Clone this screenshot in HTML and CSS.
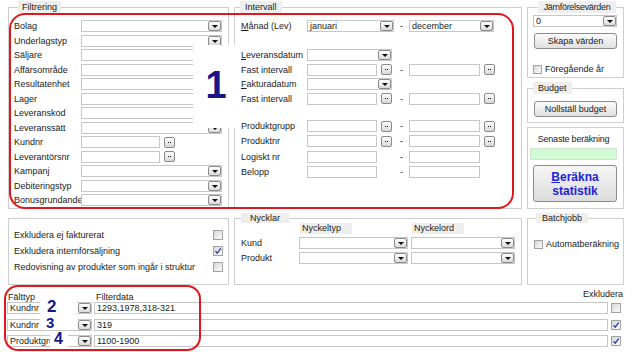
FILE: index.html
```html
<!DOCTYPE html>
<html lang="sv">
<head>
<meta charset="utf-8">
<title>Statistik</title>
<link rel="stylesheet" href="styles.css">
</head>
<body>
<div class="top">
  <fieldset class="grp filt">
    <legend>Filtrering</legend>
    <div class="frows">
      <span class="lbl">Bolag</span><div class="combo"><span></span><i class="arr"></i></div>
      <span class="lbl">Underlagstyp</span><div class="combo"><span></span><i class="arr"></i></div>
      <span class="lbl">Säljare</span><div class="inp"></div>
      <span class="lbl">Affärsområde</span><div class="inp"></div>
      <span class="lbl">Resultatenhet</span><div class="inp"></div>
      <span class="lbl">Lager</span><div class="inp"></div>
      <span class="lbl">Leveranskod</span><div class="inp"></div>
      <span class="lbl">Leveranssätt</span><div class="combo"><span></span><i class="arr"></i></div>
      <span class="lbl">Kundnr</span><div class="pair"><div class="inp w79"></div><i class="dots"></i></div>
      <span class="lbl">Leverantörsnr</span><div class="pair"><div class="inp w79"></div><i class="dots"></i></div>
      <span class="lbl">Kampanj</span><div class="combo"><span></span><i class="arr"></i></div>
      <span class="lbl">Debiteringstyp</span><div class="combo"><span></span><i class="arr"></i></div>
      <span class="lbl">Bonusgrundande</span><div class="combo"><span></span><i class="arr"></i></div>
    </div>
  </fieldset>

  <fieldset class="grp intv">
    <legend>Intervall</legend>
    <div class="igrid">
      <span class="lbl"><u>M</u>ånad (Lev)</span><div class="combo w87"><span>januari</span><i class="arr"></i></div><span class="dash">-</span><div class="combo w85"><span>december</span><i class="arr"></i></div>
    </div>
    <div class="igrid b2">
      <span class="lbl"><u>L</u>everansdatum</span><div class="combo w85"><span></span><i class="arr"></i></div><span></span><span></span>
      <span class="lbl">Fast intervall</span><div class="pair"><div class="inp w70"></div><i class="dots"></i></div><span class="dash">-</span><div class="pair"><div class="inp w71"></div><i class="dots"></i></div>
      <span class="lbl"><u>F</u>akturadatum</span><div class="combo w85"><span></span><i class="arr"></i></div><span></span><span></span>
      <span class="lbl">Fast intervall</span><div class="pair"><div class="inp w70"></div><i class="dots"></i></div><span class="dash">-</span><div class="pair"><div class="inp w71"></div><i class="dots"></i></div>
    </div>
    <div class="igrid b3">
      <span class="lbl">Produktgrupp</span><div class="pair"><div class="inp w70"></div><i class="dots"></i></div><span class="dash">-</span><div class="pair"><div class="inp w71"></div><i class="dots"></i></div>
      <span class="lbl">Produktnr</span><div class="pair"><div class="inp w70"></div><i class="dots"></i></div><span class="dash">-</span><div class="pair"><div class="inp w71"></div><i class="dots"></i></div>
      <span class="lbl">Logiskt nr</span><div class="inp w70"></div><span class="dash">-</span><div class="inp w71"></div>
      <span class="lbl">Belopp</span><div class="inp w70"></div><span class="dash">-</span><div class="inp w71"></div>
    </div>
  </fieldset>

  <div class="rcol">
    <fieldset class="grp jamf">
      <legend>Jämförelsevärden</legend>
      <div class="combo"><span>0</span><i class="arr"></i></div>
      <div class="btn">Skapa värden</div>
      <div class="chk"><i class="cb"></i><span>Föregående år</span></div>
    </fieldset>
    <fieldset class="grp budget">
      <legend>Budget</legend>
      <div class="btn">Nollställ budget</div>
    </fieldset>
    <div class="box senaste">
      <div class="sen-lbl">Senaste beräkning</div>
      <div class="green"></div>
      <div class="bigbtn"><u>B</u>eräkna<br>statistik</div>
    </div>
  </div>
</div>

<div class="mid">
  <div class="box chkpanel">
    <span>Exkludera ej fakturerat</span><i class="cb"></i>
    <span>Exkludera internförsäljning</span><i class="cb"><svg viewBox="0 0 8 8" width="8" height="8"><path d="M1.5 4.2 L3.3 6.2 L6.8 1.4" fill="none" stroke="#2a3ea8" stroke-width="1.3"/></svg></i>
    <span>Redovisning av produkter som ingår i struktur</span><i class="cb"></i>
  </div>
  <fieldset class="grp nyck">
    <legend>Nycklar</legend>
    <div class="ngrid">
      <span></span><span class="hdr">Nyckeltyp</span><span class="hdr">Nyckelord</span>
      <span class="lbl">Kund</span><div class="combo"><span></span><i class="arr"></i></div><div class="combo"><span></span><i class="arr"></i></div>
      <span class="lbl">Produkt</span><div class="combo"><span></span><i class="arr"></i></div><div class="combo"><span></span><i class="arr"></i></div>
    </div>
  </fieldset>
  <fieldset class="grp batch">
    <legend>Batchjobb</legend>
    <div class="chk"><i class="cb"></i><span>Automatberäkning</span></div>
  </fieldset>
</div>

<div class="bottom">
  <div class="bhead"><span class="h1">Fälttyp</span><span class="h2">Filterdata</span><span class="h3">Exkludera</span></div>
  <div class="brows">
    <div class="combo"><span>Kundnr</span><i class="arr"></i></div><div class="inp txt">1293,1978,318-321</div><i class="cb"></i>
    <div class="combo"><span>Kundnr</span><i class="arr"></i></div><div class="inp txt">319</div><i class="cb"><svg viewBox="0 0 8 8" width="8" height="8"><path d="M1.5 4.2 L3.3 6.2 L6.8 1.4" fill="none" stroke="#2a3ea8" stroke-width="1.3"/></svg></i>
    <div class="combo"><span class="clip">Produktgrupp</span><i class="arr"></i></div><div class="inp txt">1100-1900</div><i class="cb"><svg viewBox="0 0 8 8" width="8" height="8"><path d="M1.5 4.2 L3.3 6.2 L6.8 1.4" fill="none" stroke="#2a3ea8" stroke-width="1.3"/></svg></i>
  </div>
</div>

<div class="ring ring1"></div>
<div class="ring ring2"></div>
<div class="num n1">1</div>
<div class="num n2">2</div>
<div class="num n3">3</div>
<div class="num n4">4</div>
</body>
</html>
```

FILE: styles.css
```css
* { box-sizing: border-box; }
html, body { margin: 0; padding: 0; background: #fff; }
body {
  font-family: "Liberation Sans", Arial, sans-serif;
  font-size: 9px;
  color: #1a1a1a;
  width: 634px;
  height: 352px;
  overflow: hidden;
  position: relative;
}
u { text-decoration: underline; }

.top, .mid {
  display: grid;
  grid-template-columns: 221px 288px 97px;
  column-gap: 5px;
  padding-left: 8px;
}
.top { padding-top: 1px; }
.mid { margin-top: 4px; grid-template-rows: 72px; }

.grp {
  margin: 0;
  border: 1px solid #cfcfcf;
  padding: 0;
  min-width: 0;
}
.grp > legend {
  background: #eeeeee;
  height: 12px;
  line-height: 12px;
  padding: 0 4px;
  color: #1a1a1a;
}
.box { border: 1px solid #cfcfcf; }

.lbl { white-space: nowrap; line-height: 12px; }

.inp {
  height: 12px;
  border: 1px solid #c6c6c6;
  background: #fff;
}
.combo {
  height: 12px;
  border: 1px solid #c6c6c6;
  background: #fff;
  display: flex;
  align-items: center;
  justify-content: space-between;
  padding: 0 0 0 2px;
  line-height: 10px;
  white-space: nowrap;
  overflow: hidden;
}
.arr {
  display: block;
  flex: none;
  width: 13px;
  height: 10px;
  border: 1px solid #8a8a8a;
  border-radius: 2px;
  background: linear-gradient(#fdfdfd, #dadada);
  position: relative;
}
.arr::after {
  content: "";
  position: absolute;
  left: 3px;
  top: 3px;
  border-left: 3px solid transparent;
  border-right: 3px solid transparent;
  border-top: 3px solid #111;
}
.pair { display: flex; align-items: center; gap: 4px; }
.dots {
  display: block;
  flex: none;
  width: 11px;
  height: 11px;
  border: 1px solid #8a8a8a;
  border-radius: 2px;
  background: linear-gradient(#fdfdfd, #d8d8d8);
  position: relative;
}
.dots::after {
  content: "";
  position: absolute;
  left: 3px;
  top: 4px;
  width: 1px;
  height: 1px;
  background: #111;
  box-shadow: 2px 0 #111;
}
.w70 { width: 70px; }
.w71 { width: 71px; }
.w79 { width: 79px; }
.w85 { width: 85px; }
.w87 { width: 87px; }

/* Filtrering */
.filt { padding: 7px 6px 2px 5px; }
.filt > legend { margin-left: 4px; }
.frows {
  display: grid;
  grid-template-columns: 67px 141px;
  grid-auto-rows: 12px;
  row-gap: 2.5px;
  align-items: center;
}

/* Intervall */
.intv { padding: 7px 6px 2px 6px; }
.intv > legend { margin-left: -1px; padding: 0 5px; }
.igrid {
  display: grid;
  grid-template-columns: 66px 87px 15px 87px;
  grid-auto-rows: 12px;
  row-gap: 2.5px;
  align-items: center;
  justify-items: start;
}
.dash { justify-self: center; line-height: 12px; }
.b2 { margin-top: 17px; }
.b3 { margin-top: 15.5px; row-gap: 3.3px; }

/* right column */
.rcol { display: flex; flex-direction: column; gap: 4px; }
.jamf { padding: 2px 6px 3px 5px; }
.jamf > legend { margin-left: 2px; width: 78px; padding: 0; text-align: center; letter-spacing: -0.3px; white-space: nowrap; }
.btn {
  height: 16px;
  margin-left: 1px;
  border: 1px solid #8c8c8c;
  border-radius: 3px;
  background: linear-gradient(#fbfbfb, #e0e0e0);
  text-align: center;
  line-height: 14px;
}
.jamf .btn { margin-top: 6px; }
.chk { display: flex; align-items: center; gap: 3px; height: 9px; line-height: 9px; white-space: nowrap; }
.jamf .chk { margin-top: 16px; }
.cb {
  display: block;
  flex: none;
  width: 9px;
  height: 9px;
  border: 1px solid #a2a2a2;
  background: linear-gradient(135deg, #d8d8d8, #fbfbfb);
  position: relative;
}
.cb svg { display: block; }

.budget { padding: 7px 6px 5px 5px; }
.budget > legend { margin-left: 0; padding: 0 5px; }

.senaste { flex: 1; padding: 5px 6px 0 2px; }
.sen-lbl { text-align: center; line-height: 12px; letter-spacing: -0.2px; }
.green {
  margin-top: 3px;
  height: 12px;
  border: 1px solid #cfe6cf;
  background: #d3fbd3;
}
.bigbtn {
  margin: 5px 0 0 3px;
  height: 37px;
  border: 1px solid #8c8c8c;
  border-radius: 3px;
  background: linear-gradient(#f6f6f6, #dcdcdc);
  text-align: center;
  font-weight: bold;
  font-size: 12px;
  line-height: 14px;
  padding-top: 4px;
  color: #2222dc;
}

/* mid row */
.chkpanel {
  margin-top: 5px;
  padding: 8px 6px 0 5px;
  display: grid;
  grid-template-columns: 1fr 9px;
  grid-auto-rows: 16px;
  align-items: center;
  align-content: start;
}
.chkpanel span { white-space: nowrap; }
.chkpanel .cb { width: 10px; height: 10px; }

.nyck { padding: 0 6px 0 6px; }
.nyck > legend { height: 10px; line-height: 10px; padding: 0 9px; margin-left: 0; }
.ngrid {
  display: grid;
  grid-template-columns: 55px 109px 104px;
  column-gap: 3px;
  grid-template-rows: 10px 12px 12px;
  row-gap: 3.5px;
  align-items: center;
}
.hdr {
  justify-self: start;
  width: 52px;
  height: 11px;
  margin-left: 1px;
  background: #eeeeee;
  line-height: 11px;
  padding-left: 2px;
}
.batch { padding: 17px 6px 0 5px; }
.batch > legend { height: 10px; line-height: 10px; margin-left: 3px; padding: 0 6px; }
.batch .chk { margin-left: 1px; }

/* bottom */
.bottom { padding-left: 7px; }
.bhead {
  display: flex;
  height: 14px;
  margin-top: 3px;
  padding-right: 11px;
}
.h1, .h2 { padding-top: 3px; line-height: 12px; }
.h1 { width: 89px; padding-left: 1px; }
.h3 { margin-left: auto; line-height: 12px; }
.brows {
  display: grid;
  grid-template-columns: 85px 514px 14px;
  column-gap: 2px;
  grid-auto-rows: 12px;
  row-gap: 4.5px;
  align-items: center;
}
.brows .txt { padding-left: 2px; line-height: 10px; }
.brows .cb { width: 10px; height: 10px; margin-left: 1px; }
.clip { display: block; width: 41px; overflow: hidden; }

/* annotation overlays */
.ring {
  position: absolute;
  border: 2px solid #e3151f;
}
.ring1 { left: 9px; top: 13px; width: 505px; height: 196px; border-radius: 16px; }
.ring2 { left: 4px; top: 285px; width: 197px; height: 66px; border-radius: 14px; }
.num {
  position: absolute;
  background: #fff;
  color: #16168a;
  font-weight: bold;
  font-family: "Liberation Sans", Arial, sans-serif;
}
.n1 { left: 193px; top: 45px; width: 45px; height: 83px; font-size: 38px; line-height: 38px; text-align: center; padding-top: 21px; padding-left: 1px; }
.n2 { left: 40px; top: 299px; width: 37px; height: 16px; font-size: 17px; line-height: 15px; padding-left: 7px; }
.n3 { left: 40px; top: 316px; width: 38px; height: 14px; font-size: 15px; line-height: 13px; padding-left: 6px; }
.n4 { left: 50px; top: 332px; width: 18px; height: 15px; font-size: 16px; line-height: 14px; padding-left: 4px; }
```
